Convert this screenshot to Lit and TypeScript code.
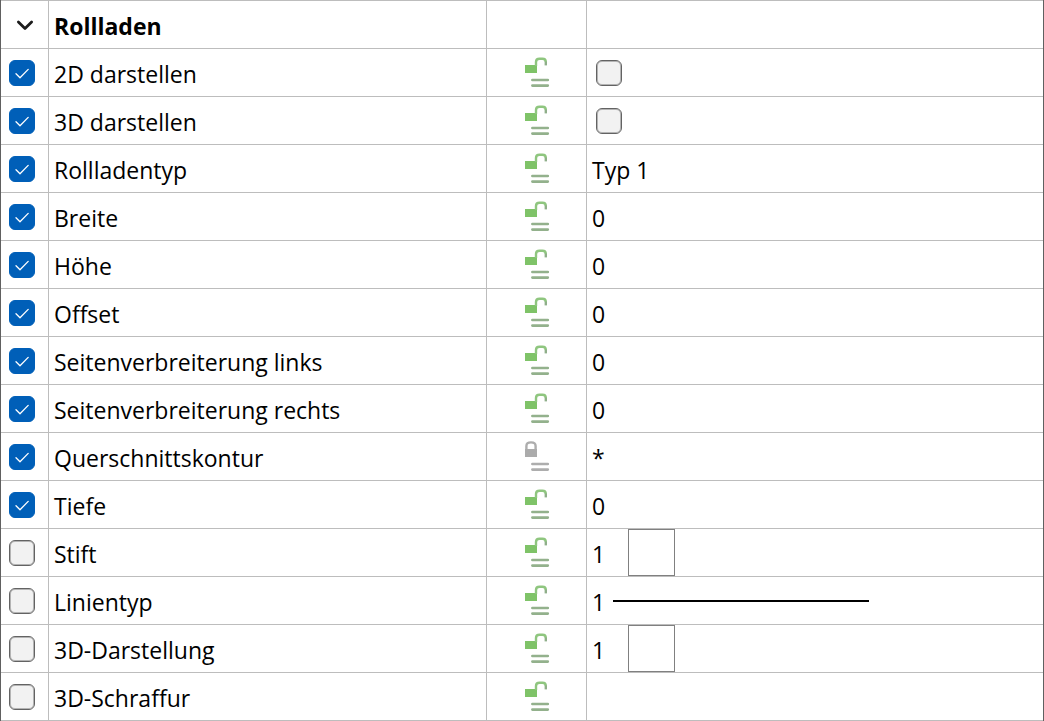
import { LitElement, html, svg, css, nothing } from "lit";
import { customElement, property, state } from "lit/decorators.js";

type Value =
  | { kind: "check" }
  | { kind: "text"; text: string }
  | { kind: "swatch"; text: string }
  | { kind: "line"; text: string }
  | { kind: "empty" };

interface Row {
  id: string;
  label: string;
  active: boolean;
  locked?: boolean;
  value: Value;
}

const text = (t: string): Value => ({ kind: "text", text: t });

const ROWS: Row[] = [
  { id: "show-2d", label: "2D darstellen", active: true, value: { kind: "check" } },
  { id: "show-3d", label: "3D darstellen", active: true, value: { kind: "check" } },
  { id: "type", label: "Rollladentyp", active: true, value: text("Typ 1") },
  { id: "width", label: "Breite", active: true, value: text("0") },
  { id: "height", label: "Höhe", active: true, value: text("0") },
  { id: "offset", label: "Offset", active: true, value: text("0") },
  { id: "side-left", label: "Seitenverbreiterung links", active: true, value: text("0") },
  { id: "side-right", label: "Seitenverbreiterung rechts", active: true, value: text("0") },
  { id: "contour", label: "Querschnittskontur", active: true, locked: true, value: text("*") },
  { id: "depth", label: "Tiefe", active: true, value: text("0") },
  { id: "pen", label: "Stift", active: false, value: { kind: "swatch", text: "1" } },
  { id: "line-type", label: "Linientyp", active: false, value: { kind: "line", text: "1" } },
  { id: "view-3d", label: "3D-Darstellung", active: false, value: { kind: "swatch", text: "1" } },
  { id: "hatch-3d", label: "3D-Schraffur", active: false, value: { kind: "empty" } },
];

@customElement("check-box")
class CheckBox extends LitElement {
  @property({ type: Boolean }) checked = false;
  @property() name = "";

  static styles = css`
    :host {
      display: block;
      width: 26px;
      height: 26px;
    }
    .box {
      display: grid;
      width: 26px;
      height: 26px;
    }
    .input,
    .tick {
      grid-area: 1 / 1;
    }
    .input {
      appearance: none;
      box-sizing: border-box;
      width: 26px;
      height: 26px;
      margin: 0;
      border: 1px solid #636363;
      border-radius: 6px;
      background: #f2f2f2;
      box-shadow: inset 0 0 0 1px #b4b4b4;
    }
    .input:checked {
      border-color: #005fb8;
      background: #005fb8;
      box-shadow: none;
    }
    .tick {
      pointer-events: none;
      fill: none;
      stroke: #fff;
      stroke-width: 1.3;
      stroke-linecap: round;
      stroke-linejoin: round;
    }
  `;

  private toggle(e: Event) {
    this.checked = (e.target as HTMLInputElement).checked;
  }

  render() {
    return html`<span class="box">
      <input class="input" type="checkbox" aria-label=${this.name} .checked=${this.checked} @change=${this.toggle} />
      ${this.checked
        ? html`<svg class="tick" width="26" height="26" viewBox="0 0 26 26" aria-hidden="true">
            <path d="M7 13.8 11 17.8 19.2 9.4" />
          </svg>`
        : nothing}
    </span>`;
  }
}

@customElement("lock-state")
class LockState extends LitElement {
  @property({ type: Boolean }) locked = false;

  static styles = css`
    :host {
      display: block;
    }
    .icon {
      display: block;
    }
    .body {
      fill: #7fc368;
    }
    .shackle,
    .tip {
      fill: none;
      stroke-width: 2.4;
    }
    .shackle {
      stroke: #8fc67f;
    }
    .tip {
      stroke: #8fae89;
    }
    .bars {
      fill: none;
      stroke: #93b18c;
      stroke-width: 2.7;
      stroke-linecap: round;
    }
    .locked .body {
      fill: #ababab;
    }
    .locked .shackle,
    .locked .bars {
      stroke: #adadad;
    }
  `;

  render() {
    const lock = this.locked
      ? svg`<rect class="body" x="0" y="8" width="12" height="8" />
            <path class="shackle" d="M1.4 8.5V5Q1.4 1.4 6 1.4T10.6 5V8.5" />`
      : svg`<rect class="body" x="0" y="8" width="12" height="8" />
            <path class="shackle" d="M11 9V5Q11 1.8 14.5 1.8H17.5Q20.8 1.8 20.8 5" />
            <path class="tip" d="M20.8 4.6V8.4" />`;
    return html`<svg
      class="icon ${this.locked ? "locked" : ""}"
      width="25"
      height="31"
      viewBox="0 0 25 31"
      role="img"
      aria-label=${this.locked ? "Gesperrt" : "Entsperrt"}
    >
      ${lock}
      <path class="bars" d="M7.4 23H22.8M7.4 28.6H22.8" />
    </svg>`;
  }
}

@customElement("app-root")
export class AppRoot extends LitElement {
  @state() private open = true;

  static styles = css`
    :host {
      display: block;
      color: #000;
      background: #fff;
      font-family: "Open Sans", "Noto Sans", sans-serif;
      font-size: 23px;
      line-height: 32px;
    }
    .grid {
      width: 100%;
      table-layout: fixed;
      border-spacing: 0;
      border: solid #606060;
      border-width: 0 1px;
    }
    .c-active {
      width: 48px;
    }
    .c-name {
      width: 438px;
    }
    .c-lock {
      width: 100px;
    }
    .cell {
      box-sizing: border-box;
      height: 48px;
      padding: 0 5px;
      border-right: 1px solid #bdbdbd;
      border-bottom: 1px solid #bdbdbd;
      text-align: left;
      vertical-align: middle;
      font-weight: 400;
      white-space: nowrap;
    }
    .cell:last-child {
      border-right: 0;
    }
    .head .cell {
      height: 49px;
      border-top: 1px solid #bdbdbd;
      font-weight: 700;
    }
    .cell.active {
      padding: 0 0 0 8px;
    }
    .cell.name,
    .cell.value {
      padding-top: 2px;
    }
    .cell.lock {
      padding: 0 0 0 38px;
    }
    .cell.value.flat {
      padding: 0 5px;
    }
    .cell.value.check {
      padding: 0 9px;
    }
    .toggle {
      display: flex;
      align-items: center;
      justify-content: center;
      width: 32px;
      height: 32px;
      padding: 0;
      border: 0;
      background: none;
    }
    .chevron {
      fill: none;
      stroke: #1c1c1c;
      stroke-width: 2.8;
      stroke-linecap: round;
      stroke-linejoin: round;
    }
    .closed {
      transform: rotate(-90deg);
    }
    .pick {
      display: flex;
      align-items: center;
    }
    .number {
      width: 36px;
      padding-top: 2px;
    }
    .number.short {
      width: 21px;
    }
    .swatch {
      box-sizing: border-box;
      width: 47px;
      height: 47px;
      border: 1px solid #808080;
      background: #fff;
    }
    .stroke {
      width: 256px;
      height: 2px;
      background: #000;
    }
  `;

  private value(row: Row) {
    const v = row.value;
    switch (v.kind) {
      case "check":
        return html`<td class="cell value check"><check-box .name=${row.label}></check-box></td>`;
      case "text":
        return html`<td class="cell value">${v.text}</td>`;
      case "swatch":
        return html`<td class="cell value flat">
          <div class="pick"><span class="number">${v.text}</span><span class="swatch"></span></div>
        </td>`;
      case "line":
        return html`<td class="cell value flat">
          <div class="pick"><span class="number short">${v.text}</span><span class="stroke"></span></div>
        </td>`;
      default:
        return html`<td class="cell value"></td>`;
    }
  }

  render() {
    return html`<table class="grid">
      <colgroup>
        <col class="c-active" />
        <col class="c-name" />
        <col class="c-lock" />
        <col />
      </colgroup>
      <thead>
        <tr class="head">
          <td class="cell active">
            <button
              class="toggle"
              aria-label="Rollladen"
              aria-expanded=${this.open ? "true" : "false"}
              @click=${() => (this.open = !this.open)}
            >
              <svg class="chevron ${this.open ? "" : "closed"}" width="18" height="12" viewBox="0 0 18 12" aria-hidden="true">
                <path d="M2.4 3 9 9.4 15.6 3" />
              </svg>
            </button>
          </td>
          <th class="cell name" scope="colgroup">Rollladen</th>
          <td class="cell lock"></td>
          <td class="cell value"></td>
        </tr>
      </thead>
      <tbody>
        ${this.open
          ? ROWS.map(
              (row) => html`<tr>
                <td class="cell active"><check-box .name=${row.label} .checked=${row.active}></check-box></td>
                <th class="cell name" scope="row">${row.label}</th>
                <td class="cell lock"><lock-state .locked=${!!row.locked}></lock-state></td>
                ${this.value(row)}
              </tr>`
            )
          : nothing}
      </tbody>
    </table>`;
  }
}
